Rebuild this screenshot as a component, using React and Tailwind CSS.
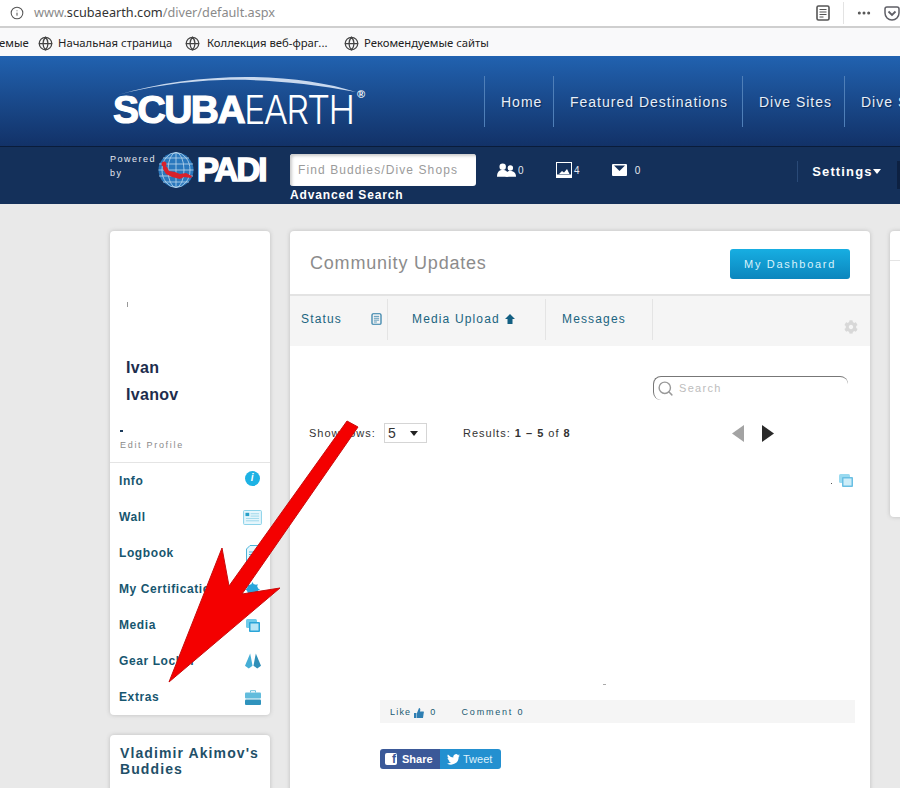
import React from 'react';
import { Info, Globe, Search, MoreHorizontal } from 'lucide-react';
import { FaCog } from 'react-icons/fa';

const sans = "font-['Liberation_Sans',Arial,sans-serif]";

const ReaderIcon = ({ className, stroke = '#555' }) => (
  <svg viewBox="0 0 14 16" className={className} fill="none" stroke={stroke}>
    <rect x="1" y="1" width="12" height="14" rx="1.5" strokeWidth="1.6" />
    <path d="M3.5 4.5h7M3.5 7h7M3.5 9.5h7M3.5 12h4" strokeWidth="1" />
  </svg>
);

const PocketIcon = () => (
  <svg viewBox="0 0 16 15" className="w-[16px] h-[15px]" fill="none">
    <path d="M1 3a2 2 0 0 1 2-2h10a2 2 0 0 1 2 2v4a7 7 0 0 1-14 0z" stroke="#5f5f66" strokeWidth="1.5" />
    <path d="M4.5 5.5 8 9l3.5-3.5" stroke="#5f5f66" strokeWidth="1.8" />
  </svg>
);

const BuddiesIcon = () => (
  <svg viewBox="0 0 20 14" className="w-[19px] h-[14px]" fill="white">
    <circle cx="6" cy="3.5" r="3.4" />
    <path d="M0 14c0-5 2.5-7 6-7s6 2 6 7z" />
    <circle cx="14" cy="5" r="2.9" />
    <path d="M9 14c0-4.5 2-6 5-6s6 1.500 6 6z" />
  </svg>
);

const PhotoIcon = () => (
  <svg viewBox="0 0 16 16" className="w-[16px] h-[16px]">
    <rect x="0.5" y="0.5" width="15" height="12.500" fill="none" stroke="white" />
    <rect y="13" width="16" height="3" fill="white" />
    <path d="M3 12l3-3 2 1.500 3-3.500 2.500 5z" fill="white" />
  </svg>
);

const MailIcon = () => (
  <svg viewBox="0 0 15 12" className="w-[15px] h-[12px]">
    <rect width="15" height="12" rx="1" fill="white" />
    <path d="M2 1.500h11L7.500 7z" fill="#14305a" />
  </svg>
);

const PadiGlobe = () => (
  <svg viewBox="0 0 36 36" className="w-[36px] h-[36px] shrink-0">
    <circle cx="18" cy="18" r="17.500" fill="#2a78bd" />
    <g fill="none" stroke="#bcd8ee" strokeWidth="0.8">
      <ellipse cx="18" cy="18" rx="8" ry="17.500" />
      <ellipse cx="18" cy="18" rx="14" ry="17.500" />
      <path d="M18 .5v35M1 12h34M.5 18h35M1 24h34M5 6h26M5 30h26" />
    </g>
    <path d="M5 13l4 2 2 4 6 1 5 2 6-1 6 3-1 2-7-1-4 2-8-2-6-3-3-5z" fill="#d8222c" />
    <circle cx="6" cy="12" r="2.500" fill="#d8222c" />
  </svg>
);

const MediaIcon = ({ className = '' }) => (
  <svg viewBox="0 0 14 13" className={`w-[14px] h-[13px] ${className}`}>
    <rect x="0" y="0" width="11" height="9" rx="1.500" fill="#6fcbea" />
    <rect x="3" y="3" width="11" height="10" rx="1" fill="#2aa5d8" />
    <rect x="4.500" y="4.500" width="8" height="7" fill="#b8e6f6" />
  </svg>
);

const RowIcon = ({ name }) => {
  if (name === 'info') {
    return (
      <div className="w-[15px] h-[15px] mt-[-6px] rounded-full bg-[#1db2e4] flex items-center justify-center text-white text-[10px] font-bold italic leading-none">
        i
      </div>
    );
  }
  if (name === 'wall') {
    return (
      <svg viewBox="0 0 20 16" className="w-[19px] h-[15px]">
        <rect x="0.5" y="0.5" width="19" height="15" rx="1" fill="#e6f6fc" stroke="#82cfe8" />
        <rect x="2.500" y="3" width="4" height="3.500" fill="#27a0c8" />
        <path d="M8 4h9M8 6.500h9M3 9h14M3 11.500h14" stroke="#9bd6ea" />
      </svg>
    );
  }
  if (name === 'logbook') {
    return (
      <svg viewBox="0 0 14 17" className="w-[14px] h-[17px]">
        <path d="M4 .5h9.500v16H.5V4z" fill="#e6f6fc" stroke="#4cb4d9" />
        <path d="M3 7h8M3 9.500h8M3 12h8" stroke="#4cb4d9" />
      </svg>
    );
  }
  if (name === 'cert') {
    return (
      <svg viewBox="0 0 16 16" className="w-[15px] h-[15px]">
        <circle cx="8" cy="8" r="6" fill="#2aa5dc" />
        <path d="M8 0l1.500 3h-3zM8 16l1.500-3h-3zM0 8l3 1.500v-3zM16 8l-3 1.500v-3zM2.300 2.300l3 1-2 2zM13.700 2.300l-1 3-2-2zM2.300 13.700l1-3 2 2zM13.700 13.700l-3-1 2-2z" fill="#2aa5dc" />
      </svg>
    );
  }
  if (name === 'media') {
    return <MediaIcon />;
  }
  if (name === 'gear') {
    return (
      <svg viewBox="0 0 17 16" className="w-[16px] h-[16px]">
        <path d="M5.500 0 L8 13 L4 16 L0 13z" fill="#45aed6" />
        <path d="M11.500 0 L9 13 L13 16 L17 13z" fill="#2f8fb8" />
      </svg>
    );
  }
  return (
    <svg viewBox="0 0 16 15" className="w-[16px] h-[15px]">
      <path d="M5.500 2.500V.7h5v1.800" fill="none" stroke="#6cc0dd" />
      <rect y="2.500" width="16" height="6" rx="1" fill="#62bcdc" />
      <rect y="9.500" width="16" height="5.500" rx="1" fill="#2f93bd" />
    </svg>
  );
};

const menu = [
  ['Info', 'info'],
  ['Wall', 'wall'],
  ['Logbook', 'logbook'],
  ['My Certifications', 'cert'],
  ['Media', 'media'],
  ['Gear Locker', 'gear'],
  ['Extras', 'extras'],
];

const Bookmark = ({ label, className }) => (
  <div className={`flex items-center ${className}`}>
    <Globe className="w-[15px] h-[15px] text-[#444]" strokeWidth={2} />
    <span>{label}</span>
  </div>
);

const App = () => {
  return (
    <div className={`relative h-[788px] overflow-hidden bg-[#e9e9e9] ${sans}`}>
      {/* browser chrome */}
      <div className="h-[28px] bg-white border-b-2 border-[#cfcfcf] flex items-center pl-[10px]">
        <Info className="w-[14px] h-[14px] text-[#555]" strokeWidth={1.8} />
        <div className="ml-[10px] text-[12.7px] font-['Noto_Sans',sans-serif] text-[#8a8a8a]">
          www.<span className="text-[#333]">scubaearth.com</span>/diver/default.aspx
        </div>
        <div className="ml-auto flex items-center">
          <ReaderIcon className="w-[14px] h-[16px]" />
          <div className="w-px h-[22px] bg-[#e3e3e3] ml-[13px] mr-[12px]" />
          <MoreHorizontal className="w-[16px] h-[16px] text-[#555] mr-[12px]" strokeWidth={2.5} />
          <PocketIcon />
        </div>
      </div>
      <div className="h-[28px] pt-[2px] bg-[#f9f9fa] flex items-center text-[11.3px] text-[#222] font-['Noto_Sans',sans-serif] whitespace-nowrap overflow-hidden">
        <span className="ml-[-1px] w-[39px]">емые</span>
        <Bookmark label="Начальная страница" className="w-[147px] gap-[5px]" />
        <Bookmark label="Коллекция веб-фраг..." className="w-[159px] gap-[7px]" />
        <Bookmark label="Рекомендуемые сайты" className="gap-[5px]" />
      </div>

      {/* site header */}
      <div className="h-[90px] bg-gradient-to-b from-[#2162b0] to-[#123268] flex items-center overflow-hidden whitespace-nowrap">
        <div className="relative ml-[113px] mt-[10px] w-[371px] shrink-0 h-[40px] flex items-end text-white">
          <svg viewBox="0 0 250 20" className="absolute left-[5px] top-[-10px] w-[238px] h-[20px]" preserveAspectRatio="none">
            <path d="M0 19C40 7 90 1 135 1c45 0 85 6 115 15C200 7 150 3 110 4 70 5 30 11 0 19z" fill="#c9d9ee" />
          </svg>
          <span className="text-[39px] leading-[33px] font-bold tracking-[-1.5px] [-webkit-text-stroke:1.2px_white]">SCUBA</span>
          <span className="text-[39px] leading-[33px] origin-left scale-x-[0.92] font-['Inter',sans-serif] font-light tracking-[-1.800px]">EARTH</span>
          <span className="absolute left-[244px] top-0 text-[11px] font-bold">®</span>
        </div>
        <nav className="flex h-[51px] text-[14px] tracking-[1px] text-[#e8eff8] [text-shadow:1px_1px_1px_#0b2a58]">
          <div className="border-l border-[#4f7fb8] pl-[16px] pt-[2px] w-[69px] flex items-center">Home</div>
          <div className="border-l border-[#4f7fb8] pl-[16px] pt-[2px] w-[189px] flex items-center">Featured Destinations</div>
          <div className="border-l border-[#4f7fb8] pl-[16px] pt-[2px] w-[102px] flex items-center">Dive Sites</div>
          <div className="border-l border-[#4f7fb8] pl-[16px] pt-[2px] flex items-center">Dive Shops</div>
        </nav>
      </div>

      {/* powered by bar */}
      <div className="h-[58px] bg-[#14305a] border-t border-[#0a1c3a] flex text-white whitespace-nowrap overflow-hidden">
        <div className="ml-[110px] w-[48px] pt-[5px] text-[9px] leading-[14px] tracking-[1.500px] text-[#e4e9f0]">
          <div>Powered</div>
          <div>by</div>
        </div>
        <div className="w-[132px] pt-[5px] flex items-start">
          <PadiGlobe />
          <span className="ml-[3px] mt-[-1px] text-[33px] leading-[38px] font-bold tracking-[-2px] [-webkit-text-stroke:1.500px_white]">PADI</span>
        </div>
        <div className="w-[193px] pt-[7px]">
          <div className="w-[186px] h-[32px] rounded-[3px] bg-white flex items-center pl-[8px] text-[12px] tracking-[1.100px] text-[#9b9b9b] shadow-[inset_2px_2px_3px_#ccc]">
            Find Buddies/Dive Shops
          </div>
          <div className="text-[12px] leading-[15px] mt-[2px] font-bold tracking-[0.850px]">Advanced Search</div>
        </div>
        <div className="ml-[14px] flex items-center h-[46px] text-[10px] text-[#e4e9f0]">
          <BuddiesIcon />
          <span className="ml-[2px] tracking-[0.5px]">0</span>
          <div className="ml-[32px]"><PhotoIcon /></div>
          <span className="ml-[2px]">4</span>
          <div className="ml-[32px]"><MailIcon /></div>
          <span className="ml-[8px]">0</span>
        </div>
        <div className="ml-[157px] mt-[14px] h-[21px] border-l border-[#2a4a78] pl-[14px] flex items-center text-[13px] font-bold tracking-[1.150px]">
          Settings
          <svg viewBox="0 0 8 5" className="w-[8px] h-[5px]"><path d="M0 0h8L4 5z" fill="white" /></svg>
        </div>
        <div className="ml-[16px] mt-[14px] w-[3px] h-[28px] bg-[#0d2142]" />
      </div>

      {/* page body */}
      <div className="flex items-start gap-[20px] pl-[110px] pt-[27px]">
        {/* left column */}
        <div className="w-[160px] shrink-0 flex flex-col gap-[20px]">
          <div className="h-[484px] bg-white rounded-[4px] shadow-[0_0_4px_#bdbdbd] flex flex-col">
            <div className="h-[231px] flex flex-col">
              <div className="ml-[17px] mt-[71px] w-px h-[5px] bg-[#999]" />
              <div className="ml-[16px] mt-[47px] text-[16px] leading-[27px] font-bold tracking-[0.3px] text-[#1d2d4d]">
                <div>Ivan</div>
                <div>Ivanov</div>
              </div>
              <div className="ml-[10px] mt-[22px] w-[3px] h-[2px] bg-[#1d3d5d]" />
              <div className="ml-[10px] mt-[8px] text-[9px] leading-[11px] tracking-[1.700px] text-[#8a8a8a]">Edit Profile</div>
            </div>
            <div className="border-t border-[#e4e4e4]">
              {menu.map(([label, icon]) => (
                <div key={label} className="h-[36px] flex items-center pl-[9px] pr-[8px] text-[12px] font-bold tracking-[0.6px] text-[#17566f] whitespace-nowrap overflow-hidden">
                  <span>{label}</span>
                  <div className="ml-auto w-[19px] flex justify-center bg-white"><RowIcon name={icon} /></div>
                </div>
              ))}
            </div>
          </div>
          <div className="h-[120px] bg-white rounded-[4px] shadow-[0_0_4px_#bdbdbd] px-[10px] pt-[10px] text-[14px] leading-[16px] font-bold tracking-[1.100px] text-[#1f5068]">
            Vladimir Akimov's Buddies
          </div>
        </div>

        {/* main card */}
        <div className="w-[580px] shrink-0 h-[620px] bg-white rounded-[4px] shadow-[0_0_4px_#bdbdbd]">
          <div className="h-[63px] flex items-center justify-between pl-[20px] pr-[20px]">
            <div className="mt-[2px] text-[18px] tracking-[0.800px] text-[#8c8c8c]">Community Updates</div>
            <div className="w-[120px] h-[30px] mt-[3px] rounded-[3px] bg-gradient-to-b from-[#17aee2] to-[#0c86bd] flex items-center justify-center text-[11px] tracking-[1.700px] text-[#d8f2fb]">
              My Dashboard
            </div>
          </div>
          <div className="relative h-[52px] border-t-2 border-[#e3e3e3] bg-[#f5f5f5] flex items-start pt-[3px] text-[12px] tracking-[1.150px] text-[#1a6480] whitespace-nowrap">
            <div className="w-[98px] h-[41px] border-r border-[#e4e4e4] flex items-center pb-[1px] pl-[11px] pr-[5px] justify-between">
              Status
              <ReaderIcon className="w-[11px] h-[12px]" stroke="#2a7ba5" />
            </div>
            <div className="w-[158px] h-[41px] border-r border-[#e4e4e4] flex items-center pb-[1px] pl-[24px] gap-[5px]">
              Media Upload
              <svg viewBox="0 0 10 10" className="w-[10px] h-[10px]"><path d="M5 0l5 5H7.500v5h-5V5H0z" fill="#135f82" /></svg>
            </div>
            <div className="w-[107px] h-[41px] border-r border-[#e4e4e4] flex items-center pb-[1px] pl-[16px]">Messages</div>
            <FaCog className="absolute right-[12px] top-[24px] w-[14px] h-[14px] text-[#d8d8d8]" />
          </div>

          <div className="flex justify-end pr-[22px] pt-[30px]">
            <div className="w-[195px] h-[24px] border-t border-l border-[#777] rounded-tl-[8px] rounded-bl-[8px] rounded-tr-[8px] flex items-center pl-[3px] gap-[5px] text-[11px] tracking-[1.300px] text-[#bdbdbd]">
              <Search className="w-[17px] h-[17px] text-[#999]" strokeWidth={2} />
              Search
            </div>
          </div>

          <div className="flex items-center h-[20px] mt-[23px] pl-[19px] text-[11px] tracking-[1px] text-[#333] whitespace-nowrap">
            <span className="w-[75px]">Show rows:</span>
            <div className="w-[43px] h-[20px] border border-[#d5d5d5] flex items-center justify-between pl-[3px] pr-[8px] text-[14px]">
              5
              <svg viewBox="0 0 8 5" className="w-[8px] h-[5px]"><path d="M0 0h8L4 5z" fill="#222" /></svg>
            </div>
            <span className="w-[107px] ml-[36px]">Results: <b>1 – 5</b> of <b>8</b></span>
            <svg viewBox="0 0 12 17" className="w-[12px] h-[17px] ml-[162px]"><path d="M12 0v17L0 8.500z" fill="#a3a3a3" /></svg>
            <svg viewBox="0 0 12 17" className="w-[12px] h-[17px] ml-[18px]"><path d="M0 0v17l12-8.500z" fill="#2a2a2a" /></svg>
          </div>

          <div className="flex justify-end items-end pr-[17px] mt-[31px] gap-[7px]">
            <div className="w-px h-px bg-[#555] mb-[3px]" />
            <MediaIcon className="opacity-70" />
          </div>

          <div className="ml-[313px] mt-[197px] w-[3px] h-px bg-[#aaa]" />

          <div className="ml-[90px] mr-[15px] mt-[15px] h-[23px] pt-[2px] bg-[#f5f5f5] flex items-center pl-[10px] text-[9px] tracking-[1.200px] text-[#1a5a72] whitespace-nowrap">
            <span>Like</span>
            <svg viewBox="0 0 10 10" className="w-[10px] h-[10px] ml-[3px]">
              <path d="M0 5h2.500v5H0zM3 5l2-5c1.500 0 1.500 1.500 1 3.500h3.500c.5 0 .5 1 .2 1.500L9 10H3z" fill="#2f7fb3" />
            </svg>
            <span className="ml-[6px]">0</span>
            <span className="ml-[25px] tracking-[1.800px]">Comment 0</span>
          </div>

          <div className="ml-[90px] mt-[26px] flex h-[20px] text-[11px] whitespace-nowrap">
            <div className="w-[60px] rounded-l-[3px] bg-[#3b5998] flex items-center pl-[5px] gap-[5px] text-white font-bold">
              <div className="w-[12px] h-[12px] rounded-[2px] bg-white flex items-end justify-end pr-[1px] text-[#3b5998] text-[12px] leading-[12px] font-bold">f</div>
              Share
            </div>
            <div className="w-[61px] rounded-r-[3px] bg-[#2390d0] flex items-center pl-[7px] gap-[3px] text-[#dff1fb]">
              <svg viewBox="0 0 24 20" className="w-[13px] h-[11px]">
                <path d="M24 2.400a10 10 0 0 1-2.800.8A5 5 0 0 0 23.300.5a10 10 0 0 1-3.100 1.200 4.900 4.900 0 0 0-8.400 4.500A14 14 0 0 1 1.700.9a4.900 4.900 0 0 0 1.500 6.600 5 5 0 0 1-2.200-.6c0 2.400 1.700 4.400 3.900 4.900a5 5 0 0 1-2.200.1 4.900 4.900 0 0 0 4.600 3.400A10 10 0 0 1 0 17.300 14 14 0 0 0 21.500 4.900 10 10 0 0 0 24 2.400z" fill="white" />
              </svg>
              Tweet
            </div>
          </div>
        </div>

        {/* right card, cut off by the window */}
        <div className="w-[200px] shrink-0 h-[286px] bg-white rounded-[4px] shadow-[0_0_4px_#bdbdbd]">
          <div className="h-[30px] border-b border-[#e4e4e4]" />
        </div>
      </div>

      {/* red annotation arrow */}
      <svg viewBox="0 0 900 788" className="absolute inset-0 w-[900px] h-[788px] pointer-events-none">
        <polygon points="347,421 358,427 242,594 280,588 169,682 222,548 229,586" fill="#f40000" stroke="#c80c0c" strokeWidth="1" />
      </svg>
    </div>
  );
};

export default App;
